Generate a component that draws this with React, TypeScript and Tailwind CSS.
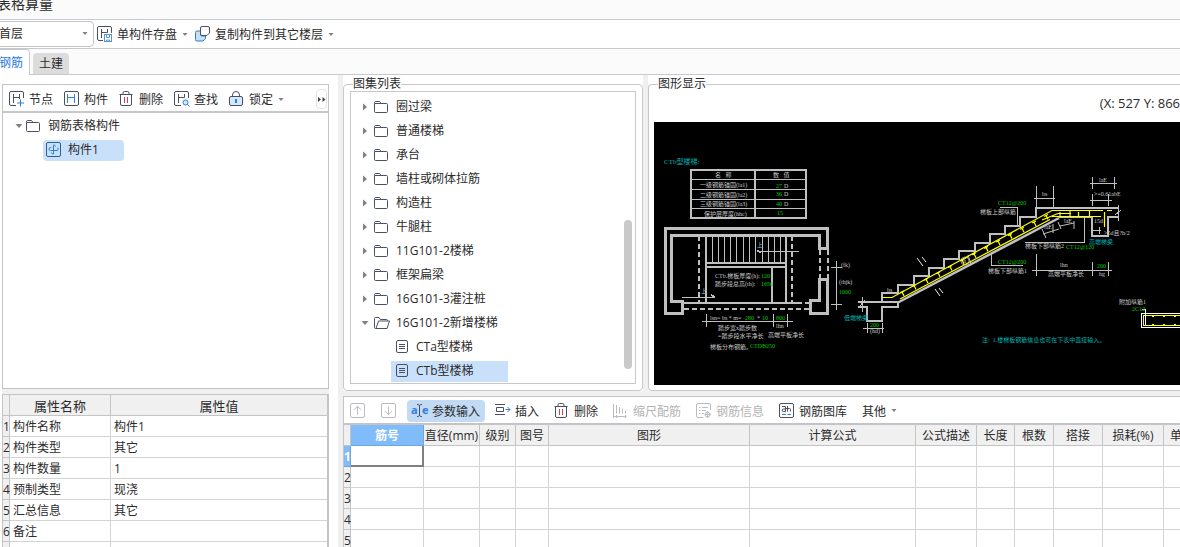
import React from "react";

const ink = "#4a4f63";
const blue = "#2f80e0";

function Svg({ children, w = 16 }: { children: React.ReactNode; w?: number }) {
  return (
    <svg width={w} height="16" viewBox={`0 0 ${w} 16`} fill="none" stroke={ink} strokeWidth="1" className="shrink-0" aria-hidden="true">
      {children}
    </svg>
  );
}

const NodeIcon = () => (
  <Svg>
    <path d="M7 14.500H2A1.500 1.500 0 0 1 .5 13V2A1.500 1.500 0 0 1 2 .5h11A1.500 1.500 0 0 1 14.500 2V7M4.500 3v9M4.500 6.500h6M10.500 3v5" />
    <path stroke={blue} d="M11.500 8.500v7M8 12h7" />
  </Svg>
);
const MemberIcon = () => (
  <Svg>
    <rect x=".5" y=".5" width="14" height="14" rx="1.500" />
    <path stroke={blue} d="M3.500 3v9M3.500 6.500h7M10.500 3v9" />
  </Svg>
);
const TrashIcon = () => (
  <Svg>
    <path d="M.5 3.500h13M4 3.500V2A1.500 1.500 0 0 1 5.500.5h3A1.500 1.500 0 0 1 10 2v1.500M1.500 3.500V13A1.500 1.500 0 0 0 3 14.500h8a1.500 1.500 0 0 0 1.500-1.500V3.500" />
    <path stroke="#e03b45" d="M5.500 6v6M8.500 6v6" />
  </Svg>
);
const FindIcon = () => (
  <Svg>
    <path d="M7 14.500H2A1.500 1.500 0 0 1 .5 13V2A1.500 1.500 0 0 1 2 .5h11A1.500 1.500 0 0 1 14.500 2V7M4.500 3v9M4.500 6.500h6M10.500 3v3.500" />
    <circle cx="11.500" cy="11.500" r="2.500" stroke={blue} fill="#d5e8fd" />
    <path stroke={blue} d="m13.300 13.300 2.200 2.200" />
  </Svg>
);
const LockIcon = () => (
  <Svg>
    <path d="M3.500 6V4a3.500 3.500 0 0 1 7 0V6" />
    <rect x=".5" y="5.500" width="13" height="9" rx="1.500" fill="#d5e8fd" />
    <path stroke={blue} strokeWidth="2" d="M7 8v4" />
  </Svg>
);
const SaveIcon = () => (
  <Svg>
    <path d="M6 14.500H2A1.500 1.500 0 0 1 .5 13V2A1.500 1.500 0 0 1 2 .5h11A1.500 1.500 0 0 1 14.500 2V7M4.500 3v9M4.500 6.500h6M10.500 3v3.500" />
    <rect x="7.500" y="8.500" width="7" height="7" fill="#fff" stroke="#5a93d4" />
    <path stroke="#5a93d4" d="M9.500 8.500v3h3v-3M9.500 15.500v-1.500h3v1.500" />
  </Svg>
);
const CopyIcon = () => (
  <Svg>
    <path fill="#c5defb" stroke="#3c78bf" d="M5.500 5H2A1.500 1.500 0 0 0 .5 6.500v7A1.500 1.500 0 0 0 2 15h6L10.500 12.500V10H7A1.500 1.500 0 0 1 5.500 8.500z" />
    <path d="M7 .5h6A1.500 1.500 0 0 1 14.500 2v5L12 9.500H7A1.500 1.500 0 0 1 5.500 8V2A1.500 1.500 0 0 1 7 .5z" />
  </Svg>
);
const ArrowBox = ({ down = false }: { down?: boolean }) => (
  <svg width="16" height="16" viewBox="0 0 16 16" fill="none" stroke="#b9bbc0" aria-hidden="true">
    <rect x=".5" y=".5" width="14" height="14" rx="1.500" />
    <path d={down ? "M7.500 3.500v8M4 8.200l3.500 3.500L11 8.200" : "M7.500 11.500v-8M4 6.800l3.500-3.500L11 6.800"} />
  </svg>
);
const ParamIcon = () => (
  <svg width="16" height="16" viewBox="0 0 16 16" aria-hidden="true" className="shrink-0 overflow-visible">
    <text x="-1" y="11" fontSize="11" fontWeight="700" fill={blue}>a</text>
    <text x="10" y="11" fontSize="11" fontWeight="700" fill={blue}>e</text>
    <path d="M5 1.500c1.500 0 2.500.3 2.500 1.500v9c0 1.200-1 1.500-2.500 1.500M10 1.500C8.500 1.500 7.500 1.800 7.500 3M7.500 12c0 1.200 1 1.500 2.500 1.500" fill="none" stroke={ink} />
  </svg>
);
const InsertIcon = () => (
  <Svg>
    <path d="M0 1.500h10M0 11.500h10M1.500 4.500h7v4h-7z" />
    <path stroke={blue} d="M10.500 6.500H15M12.500 4l2.500 2.500L12.500 9" />
  </Svg>
);
const ScaleIcon = () => (
  <svg width="16" height="16" viewBox="0 0 16 16" fill="none" stroke="#b9bbc0" aria-hidden="true">
    <path d="M.5 1v14M3.500 2v8.500M6.500 4v6.500M9.500 5.500v5M12.500 7.500v3M.5 13.500h13M3.500 12v3M12.500 12v3" />
  </svg>
);
const InfoIcon = () => (
  <svg width="16" height="16" viewBox="0 0 16 16" fill="none" stroke="#b9bbc0" aria-hidden="true">
    <path d="M7.500 14.500H2A1.500 1.500 0 0 1 .5 13V2A1.500 1.500 0 0 1 2 .5h11A1.500 1.500 0 0 1 14.500 2v5M3 4.500h1.500M6 4.500h6M3 7.500h1.500M6 7.500h4M3 10.500h1.500M6 10.500h2" />
    <circle cx="11.500" cy="11.500" r="2.500" />
    <path d="M11.500 8v7M9 11.500h6" />
  </svg>
);
const LibraryIcon = () => (
  <Svg>
    <rect x=".5" y=".5" width="14" height="14" rx="1.500" />
    <path d="M3 3.500h3.500V8.500H4.500a1 1 0 0 1 0-2.500h2M8.500 3v5.500M6.500 5.500h4a1 1 0 0 1 1 1V8.500" />
    <path stroke={blue} d="M3 11.500h4M8.500 11.500H12" />
  </Svg>
);
const Folder = ({ open = false }: { open?: boolean }) => (
  <Svg>
    {open ? (
      <path d="M2.500 13.500H1.500a1 1 0 0 1-1-1V3.500a1 1 0 0 1 1-1h3.500l1.500 2h6a1 1 0 0 1 1 1V6M2 13.500 4.500 6h11L13 13.500z" />
    ) : (
      <path d="M.5 4.500V3.500a1 1 0 0 1 1-1h4L7 4.500M.5 4.500h12a1 1 0 0 1 1 1v7a1 1 0 0 1-1 1h-11a1 1 0 0 1-1-1z" />
    )}
  </Svg>
);
const FileIcon = () => (
  <Svg w={14}>
    <rect x=".5" y="1.500" width="11" height="12" rx="1.500" />
    <path d="M3 5.500h6M3 7.500h6M3 9.500h6" />
  </Svg>
);
const PartIcon = () => (
  <svg width="16" height="16" viewBox="0 0 16 16" fill="none" stroke={blue} aria-hidden="true">
    <rect x=".5" y=".5" width="14" height="14" rx="1.500" stroke="#2b5f98" />
    <path d="M7.500 3v9M7.500 3C9 3 9.500 3.500 9.500 4.500M7.500 12c-1.500 0-2-.5-2-1.500M12 5.500v2a1 1 0 0 1-1 1H4.500a1.500 1.500 0 0 1 0-3h1" />
  </svg>
);
const Caret = () => (
  <svg width="6" height="4" viewBox="0 0 6 4" className="shrink-0 fill-[#808080]" aria-hidden="true">
    <path d="M.5 0h5L3 3z" />
  </svg>
);
const Twisty = ({ open = false }: { open?: boolean }) => (
  <svg width="8" height="8" viewBox="0 0 8 8" className="shrink-0 fill-[#808080]" aria-hidden="true">
    <path d={open ? "M.5 2h7L4 6z" : "M2 .5v7L6 4z"} />
  </svg>
);

function Tool({ icon, label, menu = false, active = false, disabled = false }: { icon?: React.ReactNode; label: string; menu?: boolean; active?: boolean; disabled?: boolean }) {
  return (
    <button
      type="button"
      disabled={disabled}
      className={`flex h-[22px] shrink-0 items-center gap-1 whitespace-nowrap rounded-sm px-[5px] ${active ? "bg-[#c2daf4]" : ""} ${disabled ? "text-[#b4b4b4]" : ""}`}
    >
      {icon}
      <span className="pt-[2px]">{label}</span>
      {menu && <span className="ml-px pt-px"><Caret /></span>}
    </button>
  );
}

/* ---------- CAD drawing ---------- */
const G = "#c0c0c0";
const GREEN = "#00c800";
const TEAL = "#00b4b4";
const Y = "#ffff00";

function T({ x, y, c = "#c8c8c8", s = 6, children }: { x: number; y: number; c?: string; s?: number; children: string }) {
  return (
    <text x={x} y={y} fill={c} fontSize={s} xmlSpace="preserve">
      {children}
    </text>
  );
}

const stairLines = [712, 718, 724, 730, 736, 743, 749, 755, 762, 768, 774, 780];
const ties = Array.from({ length: 13 }, (_, i) => 904 + i * 12);

function Drawing() {
  return (
    <svg width="526" height="263" viewBox="654 122 526 263" fill="none" role="img" aria-label="CTb型楼梯" className="block font-['Liberation_Serif','Noto_Sans_CJK_SC',serif]">
      <g stroke={G} shapeRendering="crispEdges">
        <path strokeWidth="2" d="M691 170H806V218H691zM755 170V218" />
        <path d="M691 179.500H806M691 189.500H806M691 199.500H806M691 208.500H806" strokeWidth="1" />
        <path strokeWidth="3" d="M665.500 228.500H827.500V248.500H819.500V235.500H671.500V301.500H682.500V313.500H665.500zM827.500 279.500V313.500H810.500V300.500H819.500V279.500z" />
        <path strokeWidth="2" strokeDasharray="5 3" d="M820 250V279M828 250V279M699 236V302M792 236V302M684 309H810M797 303H810" />
        <path strokeWidth="2" d="M706 236V302M786 236V302M706 263H786M706 267H786M772 267V302M682 303H797" />
        {stairLines.map((x) => <path key={x} d={`M${x}.500 236V262`} />)}
        <path d="M757 251.500H799M682 297.500H715M702 321.500H793M706.500 314V327M773.500 314V327M787.500 314V327M836.500 261V310M831 267.500H842M831 304.500H842" />
        <path d="M757 250.500l4 2M715 297l-4 -2" strokeWidth="1.500" />
        <path strokeWidth="2" d="M858 302H898V307H882V321H867V307H858M882 302V293H898V285H914V276H929V268H944V259H959V251H975V243H990V234H1005V226H1020V217H1036V208H1118M1059 217H1092V236H1108V217H1118" />
        <path strokeWidth="1" d="M862.500 297V312M860 306l5 -6M1118.500 205V221M1115 215l6 -5M863 328.500H884M867.500 323V333M882.500 323V333" />
        <path d="M991.500 253V265.500H1023M1000 207.500H1017.500V226M1034 198.500H1055M1036.500 186V207M1053.500 186V207M1090 183.500H1117M1092.500 177V189M1114.500 177V189M1090 200.500H1112M1092.500 194V206M1108.500 194V206M1092 230.500H1101M1099 227V234M1025 242.500H1084.500V216M1032 270.500H1112M1036.500 254V276M1092.500 262V276M1108.500 262V276M1142 309.500H1145.500V325" />
      </g>
      <path stroke={G} strokeWidth="2.500" d="M898 302.500 1059 218" />
      <path stroke={G} d="M1043 234l16-5M1042 229l4 9M1053 224v9M1060 226l14-3M1058 222l3 7M1074 221v8M961 261l7-4M968 255l3 9" />
      <circle cx="965" cy="261" r="4" stroke={G} strokeWidth=".7" />
      <g stroke={Y} strokeWidth="1.200">
        <path d="M882 297.500H892L1052 210.500H1103M1107 210.500h5M900 299 1050 219.500M1052 216.500H1101M1104.500 212V227M1058 213.500H1071M1042 220 1058 213.500" />
        {ties.map((x) => {
          const y = 298 - (x - 900) * 0.53;
          return <path key={x} d={`M${x} ${y}l-2 -4M${x - 4} ${y - 3}l4 -2`} />;
        })}
        <path d="M1060 216v-4M1070 211v5M1078.500 216v-4M1089.500 211v5" />
      </g>
      <path stroke="#f0f0f0" d="M917 258l6 8M922 257l4 5M935 289l5 7M939 288l4 5" />
      <g shapeRendering="crispEdges">
        <path stroke="#fff" d="M1181 313.500H1141.500V327.500H1181" />
        <path stroke={Y} d="M1181 315.500H1143.500V325.500H1181" />
        <path stroke={Y} strokeDasharray="2 9" d="M1152 316.500H1181M1152 324.500H1181" />
        <path stroke="#fff" d="M1145.500 309V325" />
      </g>
      <T x={664} y={164} c={TEAL} s={7}>CTb型楼梯:</T>
      <T x={715} y={177}>名   称</T>
      <T x={773} y={177}>数   值</T>
      <T x={700} y={187}>一级钢筋锚固(la1)</T>
      <T x={700} y={197}>二级钢筋锚固(la2)</T>
      <T x={700} y={206}>三级钢筋锚固(la3)</T>
      <T x={704} y={216}>保护层厚度(hhc)</T>
      {[["27", 188], ["36", 196], ["40", 206]].map(([v, y]) => (
        <React.Fragment key={v}>
          <T x={776} y={Number(y)} c={GREEN}>{String(v)}</T>
          <T x={784} y={Number(y)}>D</T>
        </React.Fragment>
      ))}
      <T x={777} y={215} c={GREEN}>15</T>
      <T x={757} y={247} c="#7fc4d4">上</T>
      <T x={701} y={293} c="#7fc4d4">上</T>
      <T x={715} y={278}>CTb.梯板厚度(h):</T>
      <T x={761} y={278} c={GREEN}>120</T>
      <T x={715} y={286}>踏步段总高(th):</T>
      <T x={761} y={286} c={GREEN}>1650</T>
      <T x={710} y={320}>lsn= bs * m=</T>
      <T x={745} y={320} c={GREEN}>280</T>
      <T x={757} y={320}>*</T>
      <T x={762} y={320} c={GREEN}>10</T>
      <T x={776} y={320} c={GREEN}>800</T>
      <T x={776} y={328}>lhn</T>
      <T x={718} y={330}>踏步宽x踏步数</T>
      <T x={718} y={338}>=踏步段水平净长</T>
      <T x={768} y={337}>高端平板净长</T>
      <T x={710} y={349}>梯板分布钢筋。</T>
      <T x={750} y={348} c={GREEN}>CTDB250</T>
      <T x={841} y={267}>(fk)</T>
      <T x={839} y={284}>(thjk)</T>
      <T x={839} y={294} c={GREEN}>1600</T>
      <T x={887} y={292}>bs</T>
      <T x={963} y={263}>h</T>
      <T x={844} y={320} c={TEAL}>低端梯梁</T>
      <T x={870} y={327} c={GREEN}>200</T>
      <T x={870} y={333}>(hd)</T>
      <T x={998} y={205} c={GREEN}>CT12@200</T>
      <T x={980} y={214}>梯板上部纵筋</T>
      <T x={998} y={264} c={GREEN}>CT12@200</T>
      <T x={988} y={273}>梯板下部纵筋1</T>
      <T x={1042} y={196}>bs</T>
      <T x={1099} y={182}>laE</T>
      <T x={1094} y={196}>&gt;=0.61abE</T>
      <T x={1094} y={223}>15d</T>
      <T x={1064} y={223}>laE</T>
      <T x={1044} y={229}>laE</T>
      <T x={1104} y={235}>&gt;5d且?h/2</T>
      <T x={1089} y={244} c={TEAL}>高端梯梁</T>
      <T x={1025} y={248}>梯板下部纵筋2</T>
      <T x={1066} y={249} c={GREEN}>CT12@120</T>
      <T x={1060} y={267}>lhn</T>
      <T x={1097} y={268} c={GREEN}>200</T>
      <T x={1048} y={276}>高端平板净长</T>
      <T x={1099} y={276}>hg</T>
      <T x={1119} y={304}>附加纵筋1</T>
      <T x={1132} y={311} c={GREEN}>2C12</T>
      <T x={982} y={342} c={TEAL}>注:  1.楼梯板钢筋信息也可在下表中直接输入。</T>
    </svg>
  );
}

/* ---------- data ---------- */
const folders = ["圈过梁", "普通楼梯", "承台", "墙柱或砌体拉筋", "构造柱", "牛腿柱", "11G101-2楼梯", "框架扁梁", "16G101-3灌注桩"];
const props: [string, string][] = [
  ["构件名称", "构件1"],
  ["构件类型", "其它"],
  ["构件数量", "1"],
  ["预制类型", "现浇"],
  ["汇总信息", "其它"],
  ["备注", ""],
];
const headers = ["直径(mm)", "级别", "图号", "图形", "计算公式", "公式描述", "长度", "根数", "搭接", "损耗(%)"];

export default function App() {
  return (
    <div className="flex h-screen flex-col overflow-hidden bg-white font-['Open_Sans','Noto_Sans_CJK_SC',sans-serif] text-[12px] leading-4 text-[#2b2b2b]">
      <header className="h-5 shrink-0 border-b border-[#c6c9cf] bg-[#fbfbfc]">
        <h1 className="-ml-[3px] -mt-1 text-[14px] leading-4">表格算量</h1>
      </header>

      <div className="flex h-[29px] shrink-0 items-center border-b border-[#c6c9cf]">
        <div className="relative -ml-1 flex h-[26px] w-[98px] items-center rounded border border-[#c4c4c8]">
          <select aria-label="楼层" className="h-full w-full appearance-none bg-transparent pl-[2px] outline-none">
            <option>首层</option>
          </select>
          <span className="pointer-events-none absolute right-[5px]"><Caret /></span>
        </div>
        <div className="-ml-[2px] flex -space-x-[3px]">
          <Tool icon={<SaveIcon />} label="单构件存盘" menu />
          <Tool icon={<CopyIcon />} label="复制构件到其它楼层" menu />
        </div>
      </div>

      <nav className="flex h-[26px] shrink-0 bg-[#fbfbfc]">
        <button type="button" className="flex w-[30px] items-center overflow-hidden rounded-tr border-r border-t border-[#c6c9cf] bg-white text-[#1f7ae0]">
          <span className="-ml-[1px] whitespace-nowrap">钢筋</span>
        </button>
        <div className="flex flex-1 items-end border-b border-[#c6c9cf] pl-[3px]">
          <button type="button" className="h-[21px] w-9 rounded-t bg-[#dcdcdc]">土建</button>
        </div>
      </nav>

      <main className="flex min-h-0 flex-1">
        <aside className="flex w-[338px] shrink-0 flex-col pl-[2px] pr-[9px] pt-[9px]">
          <div className="shrink-0 border border-[#c4c4c4]">
            <div className="flex h-7 items-center gap-px border-b-2 border-[#c8c8cc] pl-[1px] pt-[2px]">
              <Tool icon={<NodeIcon />} label="节点" />
              <Tool icon={<MemberIcon />} label="构件" />
              <Tool icon={<TrashIcon />} label="删除" />
              <Tool icon={<FindIcon />} label="查找" />
              <Tool icon={<LockIcon />} label="锁定" menu />
              <button type="button" aria-label="更多" className="ml-auto mr-px flex h-5 w-[11px] shrink-0 items-center justify-center rounded border border-[#e4e4e8]">
                <svg width="8" height="5" viewBox="0 0 8 5" className="shrink-0 fill-[#444]" aria-hidden="true"><path d="M0 0v5l3-2.500zM4.500 0v5l3-2.500z" /></svg>
              </button>
            </div>
            <ul className="h-[275px] pt-px">
              <li className="flex h-6 items-center pl-3">
                <Twisty open />
                <span className="ml-[3px] mr-[6px] flex"><Folder /></span>
                钢筋表格构件
              </li>
              <li className="flex h-6 items-center pl-10">
                <span className="flex h-[21px] w-[81px] items-center gap-[6px] rounded-sm bg-[#c9e0fa] pl-[3px]"><PartIcon />构件1</span>
              </li>
            </ul>
          </div>
          <div className="h-[5px] shrink-0 bg-[#f0f0f0]" />
          <table className="w-full shrink-0 table-fixed border-separate border-spacing-0 border-l border-r-2 border-t border-[#c4c4c4]">
            <colgroup><col className="w-[7px]" /><col className="w-[101px]" /><col /></colgroup>
            <thead>
              <tr className="h-[21px] bg-[#f0f0f0] text-[13px]">
                <th className="border-b border-r border-[#c4c4c4] p-0" />
                <th className="border-b border-r border-[#c4c4c4] p-0 pt-[2px] font-normal">属性名称</th>
                <th className="border-b border-[#c4c4c4] p-0 pt-[2px] font-normal">属性值</th>
              </tr>
            </thead>
            <tbody>
              {props.map(([k, v], i) => (
                <tr key={k} className="h-[21px]">
                  <td className="border-b border-r border-[#c4c4c4] bg-[#f0f0f0] p-0 pt-[2px]">{i + 1}</td>
                  <td className="border-b border-r border-[#d4d4d4] p-0 pl-[3px] pt-[2px]">{k}</td>
                  <td className="border-b border-[#d4d4d4] p-0 pl-[3px] pt-[2px]">{v}</td>
                </tr>
              ))}
              <tr className="h-[21px]">
                <td className="border-r border-[#c4c4c4] bg-[#f0f0f0] p-0" />
                <td className="border-r border-[#d4d4d4] p-0" />
                <td className="p-0" />
              </tr>
            </tbody>
          </table>
        </aside>

        <div className="flex min-w-0 flex-1 flex-col bg-[#f0f0f0] pl-[5px]">
          <div className="flex shrink-0 gap-[5px]">
            <div className="w-[300px] shrink-0 bg-white">
              <fieldset className="h-[316px] rounded border border-[#c8c8c8] px-[6px]">
                <legend className="ml-[3px] h-[18px] leading-[18px]">图集列表</legend>
                <div className="-mt-[2px] flex h-[293px] border border-[#c8c8c8]">
                  <ul className="flex-1 pt-[3px]">
                    {folders.map((f) => (
                      <li key={f} className="flex h-6 items-center pl-[10px]">
                        <Twisty />
                        <span className="ml-[5px] mr-[6px] flex"><Folder /></span>
                        {f}
                      </li>
                    ))}
                    <li className="flex h-6 items-center pl-[10px]">
                      <Twisty open />
                      <span className="ml-[5px] mr-[6px] flex"><Folder open /></span>
                      16G101-2新增楼梯
                    </li>
                    <li className="flex h-6 items-center pl-10">
                      <span className="flex h-[21px] w-[117px] items-center gap-[6px] pl-[5px]"><FileIcon />CTa型楼梯</span>
                    </li>
                    <li className="flex h-6 items-center pl-10">
                      <span className="flex h-[21px] w-[117px] items-center gap-[6px] bg-[#c9e0fa] pl-[5px]"><FileIcon />CTb型楼梯</span>
                    </li>
                  </ul>
                  <div className="flex w-[11px] flex-col justify-end pb-[14px]">
                    <div className="h-[149px] w-2 rounded-full bg-[#c9c9c9]" />
                  </div>
                </div>
              </fieldset>
            </div>
            <div className="min-w-0 flex-1 bg-white">
              <fieldset className="h-[316px] min-w-0 rounded-l border border-r-0 border-[#c8c8c8] pl-[5px]">
                <legend className="ml-[4px] h-[18px] leading-[18px]">图形显示</legend>
                <div className="flex h-[29px] justify-end whitespace-nowrap pt-[2px] text-[13px]">
                  <span>(X: 527 Y: 866</span>
                </div>
                <div className="h-[263px] overflow-hidden bg-black"><Drawing /></div>
              </fieldset>
            </div>
          </div>

          <div className="mt-[5px] flex min-h-0 flex-1 flex-col border-l border-t border-[#c4c4c4] bg-white">
            <div className="flex h-7 shrink-0 items-center gap-[5px] border-b-2 border-[#c4c4c8] pl-[1px] pt-px">
              <button type="button" disabled aria-label="上移" className="px-[5px]"><ArrowBox /></button>
              <button type="button" disabled aria-label="下移" className="px-[5px]"><ArrowBox down /></button>
              <Tool icon={<ParamIcon />} label="参数输入" active />
              <Tool icon={<InsertIcon />} label="插入" />
              <Tool icon={<TrashIcon />} label="删除" />
              <Tool icon={<ScaleIcon />} label="缩尺配筋" disabled />
              <Tool icon={<InfoIcon />} label="钢筋信息" disabled />
              <Tool icon={<LibraryIcon />} label="钢筋图库" />
              <Tool label="其他" menu />
            </div>
            <table className="w-full table-fixed border-separate border-spacing-0">
              <colgroup>
                <col className="w-[7px]" />
                <col className="w-[73px]" />
                <col className="w-[56px]" />
                <col className="w-[36px]" />
                <col className="w-[33px]" />
                <col className="w-[201px]" />
                <col className="w-[166px]" />
                <col className="w-[61px]" />
                <col className="w-[38px]" />
                <col className="w-[39px]" />
                <col className="w-[49px]" />
                <col className="w-[61px]" />
                <col />
              </colgroup>
              <thead>
                <tr className="h-[21px] bg-[#f0f0f0]">
                  <th className="border-b border-r border-[#c4c4c4] p-0" />
                  <th className="border-b border-r border-[#6ba6e8] bg-[#80bbfa] p-0 pt-[2px] font-bold text-white">筋号</th>
                  {headers.map((h) => (
                    <th key={h} className="whitespace-nowrap border-b border-r border-[#c4c4c4] p-0 pt-[2px] font-normal">{h}</th>
                  ))}
                  <th className="whitespace-nowrap border-b border-[#c4c4c4] p-0 pl-[6px] pt-[2px] text-left font-normal">单</th>
                </tr>
              </thead>
              <tbody>
                {[1, 2, 3, 4, 5].map((n) => (
                  <tr key={n} className="h-[21px]">
                    <td className={`border-b border-r p-0 pt-[2px] ${n === 1 ? "border-[#6ba6e8] bg-[#80bbfa] font-bold text-white" : "border-[#c4c4c4] bg-[#f0f0f0]"}`}>{n}</td>
                    <td className={`p-0 ${n === 1 ? "border-b-2 border-r-2 border-[#808080]" : "border-b border-r border-[#d4d4d4]"}`}>
                      {n === 1 && <input aria-label="筋号" className="block h-[19px] w-full bg-white outline-none" />}
                    </td>
                    {headers.map((h) => (
                      <td key={h} className="border-b border-r border-[#d4d4d4] p-0" />
                    ))}
                    <td className="border-b border-[#d4d4d4] p-0" />
                  </tr>
                ))}
              </tbody>
            </table>
          </div>
        </div>
      </main>
    </div>
  );
}
